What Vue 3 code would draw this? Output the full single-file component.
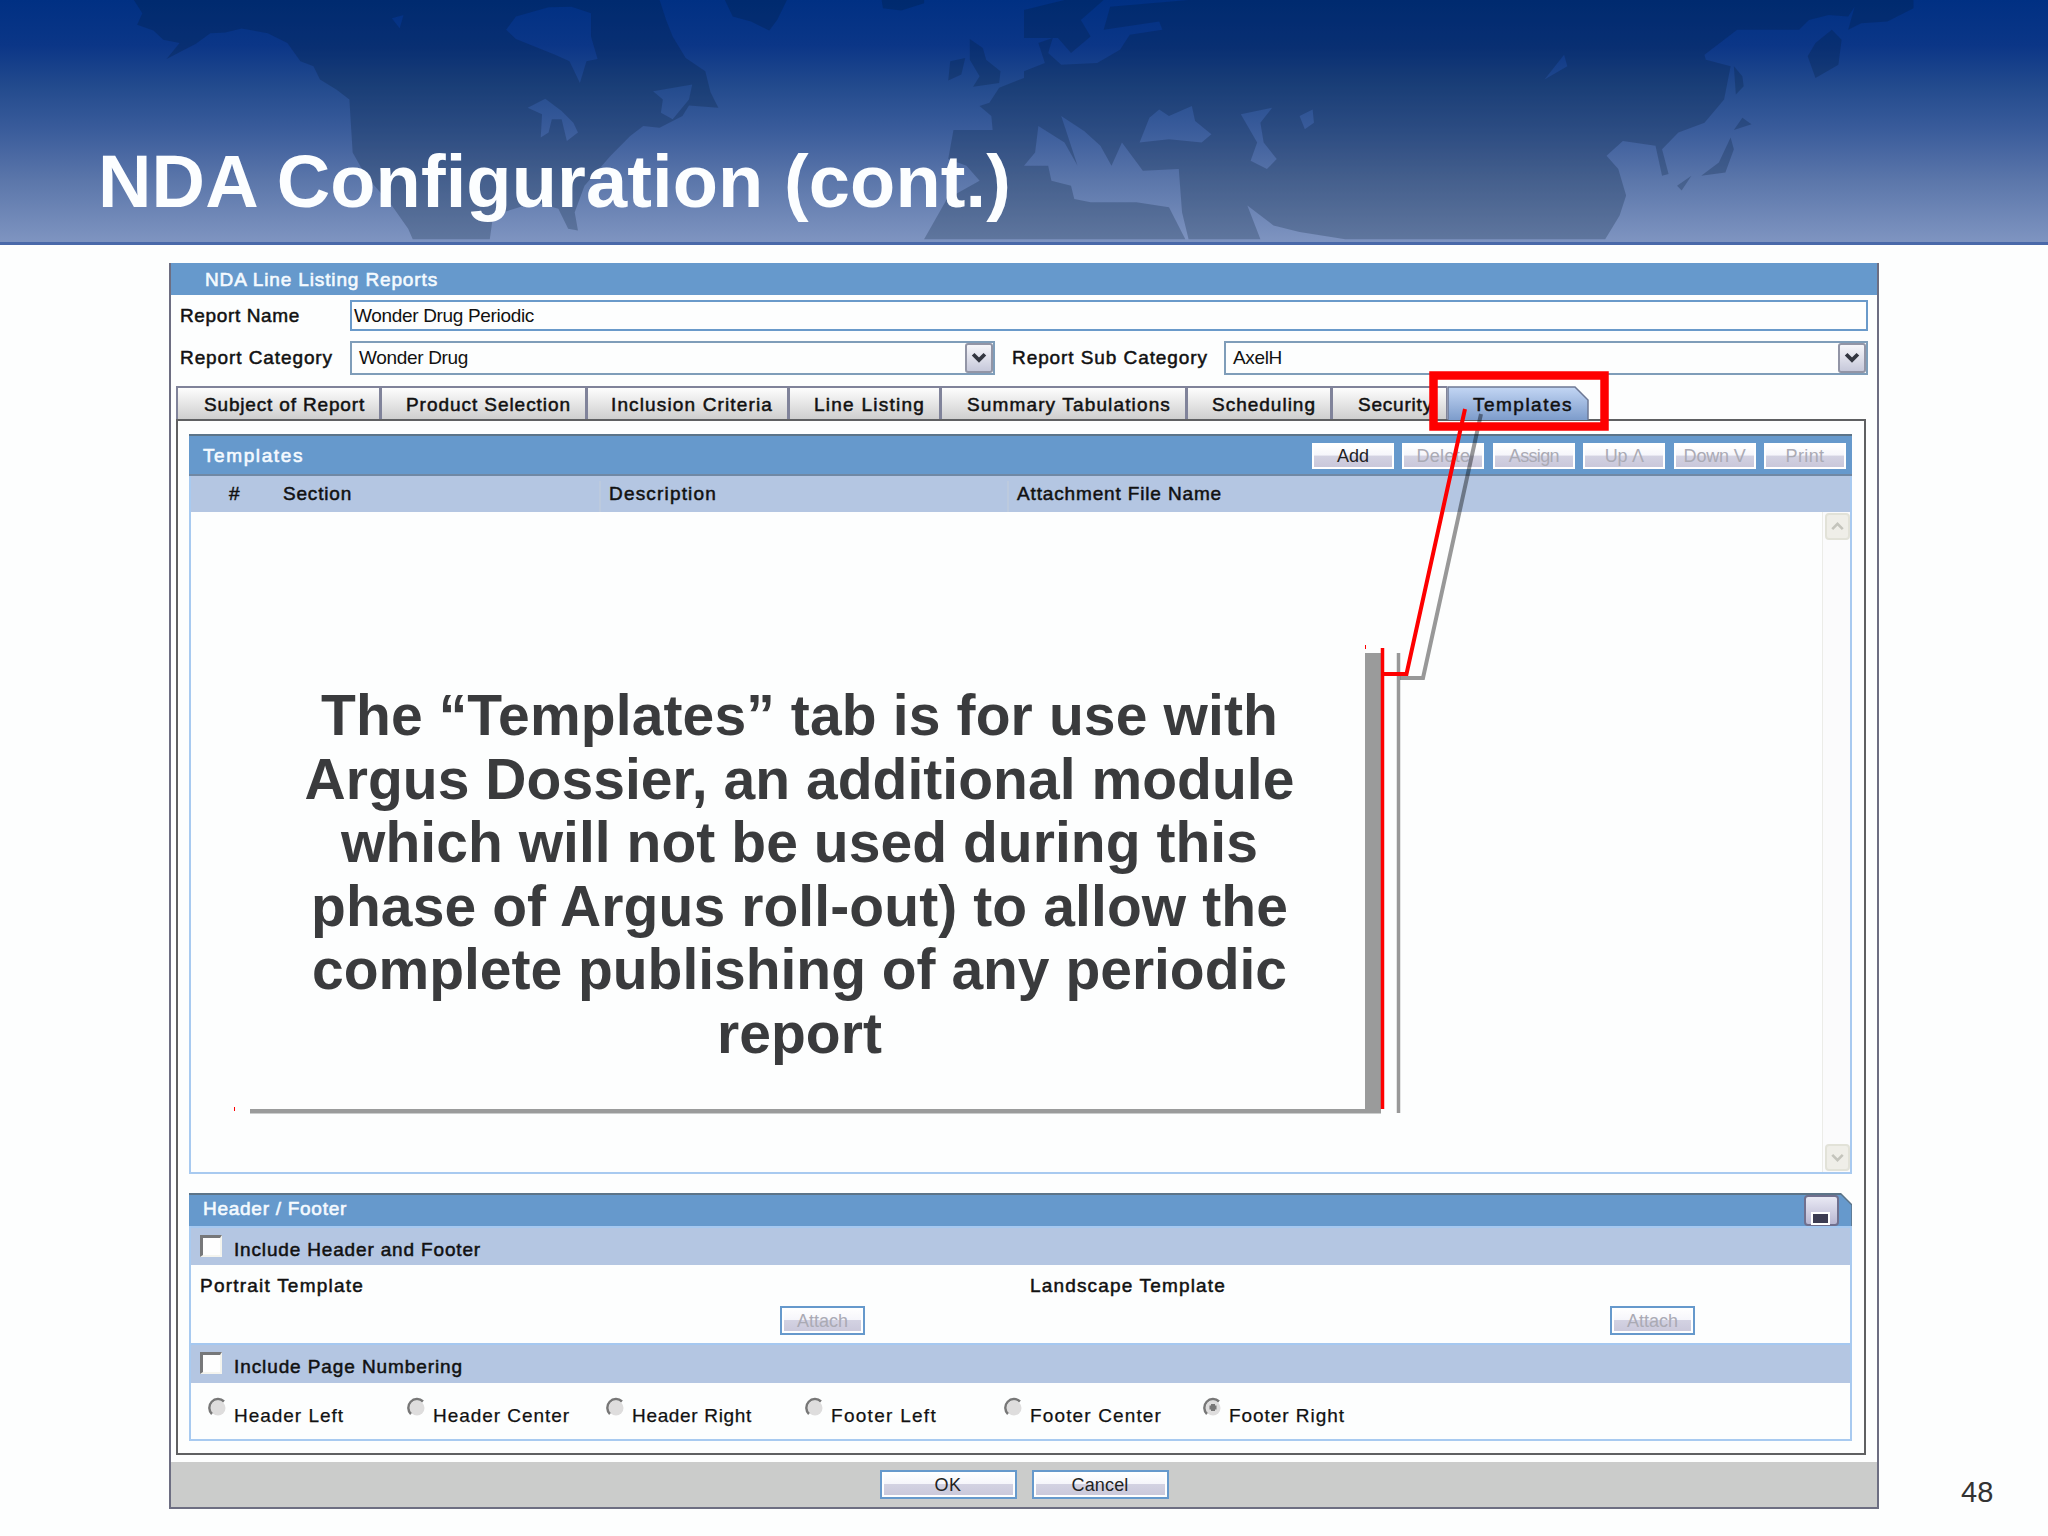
<template>
  <div class="slide">
    <header class="banner">
      <svg class="map" viewBox="0 0 3136 730" preserveAspectRatio="none">
        <g fill="#001a33" fill-opacity="0.24" fill-rule="evenodd">
          <path v-for="(d, i) in lands" :key="i" :d="d" />
        </g>
      </svg>
      <h1><span v-fit="913">NDA Configuration (cont.)</span></h1>
    </header>

    <main class="dialog">
      <div class="dialog-title"><span v-fit="233">NDA Line Listing Reports</span></div>

      <div class="row name-row">
        <label class="strong"><span v-fit="120">Report Name</span></label>
        <div class="input"><span v-fit="180">Wonder Drug Periodic</span></div>
      </div>
      <div class="row category-row">
        <label class="strong"><span v-fit="153">Report Category</span></label>
        <div class="select first">
          <span v-fit="109">Wonder Drug</span>
          <i class="arrow"><svg viewBox="0 0 28 31"><path d="M7 11l7 7 7-7" /></svg></i>
        </div>
        <label class="strong sub"><span v-fit="196">Report Sub Category</span></label>
        <div class="select second">
          <span v-fit="49">AxelH</span>
          <i class="arrow"><svg viewBox="0 0 28 31"><path d="M7 11l7 7 7-7" /></svg></i>
        </div>
      </div>

      <nav class="tabs">
        <div
          v-for="tab in tabs"
          :key="tab.label"
          class="tab strong"
          :class="{ active: tab.active }"
          :style="{ width: tab.width + 'px', paddingLeft: tab.pad + 'px' }"
        >
          <svg v-if="tab.active" class="tab-shape" viewBox="0 0 142 34">
            <defs>
              <linearGradient id="tabFill" x1="0" y1="0" x2="0" y2="1">
                <stop offset="0" stop-color="#c3d6f4" />
                <stop offset="1" stop-color="#7d9ccb" />
              </linearGradient>
            </defs>
            <path d="M1 34V1H128L141 14V34" fill="url(#tabFill)" stroke="#6d7894" stroke-width="1.5" />
          </svg>
          <span v-fit="tab.text">{{ tab.label }}</span>
        </div>
      </nav>

      <section class="panel">
        <div class="list">
          <div class="list-head">
            <span v-fit="101" class="heading">Templates</span>
            <div class="tools">
              <button v-for="b in tools" :key="b.label" class="btn tool" :class="{ off: b.off }">
                <span v-fit="b.text">{{ b.label }}</span>
              </button>
            </div>
          </div>
          <div class="columns strong">
            <div class="col num"><span>#</span></div>
            <div class="col sec"><span v-fit="69">Section</span></div>
            <div class="col desc"><span v-fit="108">Description</span></div>
            <div class="col file"><span v-fit="205">Attachment File Name</span></div>
          </div>
          <div class="list-body">
            <div class="scrollbar">
              <i class="scroll-btn"><svg viewBox="0 0 24 26"><path d="M6 16l6-6 6 6" /></svg></i>
              <i class="scroll-btn"><svg viewBox="0 0 24 26"><path d="M6 10l6 6 6-6" /></svg></i>
            </div>
          </div>
        </div>

        <div class="hf">
          <div class="hf-head">
            <span v-fit="144" class="heading">Header / Footer</span>
            <i class="minus"></i>
            <svg class="corner" viewBox="0 0 12 33"><path d="M0 0H12V12Z" fill="#fdfefe" /><path d="M0 0L12 12V33" fill="none" stroke="#5c7488" stroke-width="1.5" /></svg>
          </div>
          <div class="band strong"><i class="check"></i><span v-fit="247">Include Header and Footer</span></div>
          <div class="attach-row">
            <div class="attach">
              <span v-fit="164" class="strong">Portrait Template</span>
              <button class="btn framed off"><span v-fit="51">Attach</span></button>
            </div>
            <div class="attach">
              <span v-fit="196" class="strong">Landscape Template</span>
              <button class="btn framed off"><span v-fit="51">Attach</span></button>
            </div>
          </div>
          <div class="band second strong"><i class="check"></i><span v-fit="229">Include Page Numbering</span></div>
          <div class="radios">
            <div v-for="r in radios" :key="r.label" class="radio">
              <svg viewBox="0 0 20 20">
                <circle cx="11" cy="11" r="7.5" fill="#dedddd" />
                <path d="M5 17A8 8 0 0 1 17 4.500" fill="none" stroke="#777" stroke-width="2.500" />
                <path v-if="r.on" d="M11 7v7M7.500 10.500h7" stroke="#777" stroke-width="4" />
              </svg>
              <span v-fit="r.text">{{ r.label }}</span>
            </div>
          </div>
        </div>
      </section>

      <footer class="actions">
        <button class="btn framed"><span v-fit="27">OK</span></button>
        <button class="btn framed"><span v-fit="57">Cancel</span></button>
      </footer>
    </main>

    <div class="note">
      <p v-for="line in note" :key="line.label"><span v-fit="line.text">{{ line.label }}</span></p>
    </div>

    <svg class="marks" viewBox="0 0 2048 1536">
      <g fill="none" stroke="#000" stroke-opacity="0.4" stroke-width="4">
        <path d="M1481 414L1423 678H1400" />
        <path d="M1398.500 653V1113" stroke-width="3.500" />
      </g>
      <path d="M1365 653H1381V1113.500H250V1109H1365Z" fill="#9a9b9b" />
      <g fill="none" stroke="#fe0000">
        <path d="M1465 409L1406.500 674H1383" stroke-width="4" />
        <path d="M1382.500 648V1109" stroke-width="3.500" />
        <path d="M1365.500 645V649M234.500 1107V1111" stroke-width="1" />
        <rect x="1433.500" y="375.500" width="171" height="51" stroke-width="8.500" />
      </g>
    </svg>
    <span class="page">48</span>
  </div>
</template>

<script setup>
// Spreads the letters of a label so that it takes exactly the given width.
const vFit = {
  mounted(el, { value }) {
    const natural = el.getBoundingClientRect().width;
    el.style.letterSpacing = (value - natural) / el.textContent.length + 'px';
  },
};

const tabs = [
  { label: 'Subject of Report', width: 204, pad: 26, text: 161 },
  { label: 'Product Selection', width: 206, pad: 24, text: 165 },
  { label: 'Inclusion Criteria', width: 202, pad: 23, text: 162 },
  { label: 'Line Listing', width: 152, pad: 24, text: 111 },
  { label: 'Summary Tabulations', width: 246, pad: 25, text: 204 },
  { label: 'Scheduling', width: 145, pad: 24, text: 104 },
  { label: 'Security', width: 116, pad: 25, text: 75 },
  { label: 'Templates', width: 142, pad: 26, text: 100, active: true },
];

const tools = [
  { label: 'Add', text: 32 },
  { label: 'Delete', text: 54, off: true },
  { label: 'Assign', text: 50, off: true },
  { label: 'Up Λ', text: 39, off: true },
  { label: 'Down V', text: 62, off: true },
  { label: 'Print', text: 39, off: true },
];

const radios = [
  { label: 'Header Left', text: 110 },
  { label: 'Header Center', text: 137 },
  { label: 'Header Right', text: 120 },
  { label: 'Footer Left', text: 106 },
  { label: 'Footer Center', text: 132 },
  { label: 'Footer Right', text: 116, on: true },
];

const note = [
  { label: 'The “Templates” tab is for use with', text: 957 },
  { label: 'Argus Dossier, an additional module', text: 990 },
  { label: 'which will not be used during this', text: 917 },
  { label: 'phase of Argus roll-out) to allow the', text: 977 },
  { label: 'complete publishing of any periodic', text: 975 },
  { label: 'report', text: 165 },
];

const lands = [
  // North America with Hudson Bay and the Great Lakes cut out
  'M205 0L218 40 210 75 235 92 250 120 275 130 255 178 300 132 322 100 345 98 370 86 410 100 440 130 460 185 480 200 490 240 515 270 535 300 540 460 560 530 600 620 625 690 632 722H750L755 650 820 610 855 630 870 690 885 695 880 640 895 560 935 470 965 410 985 380 1010 385 1045 350 1055 318 1100 325 1088 278 1080 215 1050 175 1030 110 1020 60 1010 0Z' +
    'M840 22L790 50 775 90 790 118 850 165 872 185 888 250 898 185 915 178 905 110 905 40 875 20Z' +
    'M835 298L808 325 830 345 828 415 840 400 845 360 860 360 868 425 885 400 878 370 860 335ZM1000 275L1060 255 1055 300 1030 360 1012 340 1015 300ZM600 55L618 45 612 85Z',
  // Greenland and Iceland
  'M1110 0L1122 50 1150 65 1178 92 1190 60 1205 0ZM1350 0L1352 25 1380 32 1415 10V0Z',
  // British Isles
  'M1485 118L1505 145 1510 180 1532 215 1530 250 1490 262 1500 230 1485 180ZM1455 185L1478 175 1472 225 1452 243Z',
  // Europe and Asia
  'M1568 235L1530 265 1515 310 1500 320 1518 350 1520 392H1460L1452 480 1480 500 1500 545 1450 600 1415 722H1815L1790 625 1740 610 1670 610 1645 600 1640 560 1610 545 1605 500 1568 500 1585 460 1590 380 1630 430 1650 500 1625 350 1660 395 1685 440 1702 500 1718 430 1750 515 1805 510 1810 640 1820 722H1930L1910 620 1950 680 1990 700 2060 722H2458L2480 650 2490 590 2478 510 2460 470 2485 425 2535 440 2545 530 2555 525 2545 450 2570 400 2610 370 2640 300 2650 200 2612 180 2610 165 2660 90H2755L2770 60 2800 45 2830 50 2840 20 2830 90 2850 70 2890 65 2930 25V0H1820L1700 20 1690 90 1775 65 1780 90 1730 105 1715 150 1680 190 1625 195 1605 160 1612 115 1590 130 1600 190 1568 215Z' +
    'M1745 430L1760 355 1775 330 1790 350 1825 320 1830 365 1855 405 1840 430 1790 420ZM1900 345L1948 325 1930 370 1935 430 1955 480 1940 510 1915 485 1925 430ZM1990 350L2010 330 2012 370 1998 390ZM2365 240L2395 165 2400 200Z',
  // Scandinavia
  'M1568 30L1630 0H1690L1655 60 1670 110 1640 160 1620 115 1568 115Z',
  // Kamchatka, Sakhalin and Japan
  'M2805 90L2820 120 2815 195 2780 235 2768 170 2780 130ZM2655 200L2668 230 2670 260 2658 285ZM2668 355L2682 375 2655 392ZM2650 415L2655 450 2642 520 2605 530 2632 490ZM2568 560L2590 530 2575 575Z',
];
</script>

<style>
body {
  margin: 0;
  background: #fdfefe;
}
</style>

<style scoped>
.slide {
  position: relative;
  width: 2048px;
  height: 1536px;
  overflow: hidden;
  background: #fdfefe;
  font-family: "Liberation Sans", Arial, sans-serif;
  font-size: 19px;
  line-height: 24px;
  color: #111;
}

.slide * {
  box-sizing: border-box;
}

.slide span {
  display: inline-block;
  white-space: nowrap;
}

.strong {
  -webkit-text-stroke: 0.5px currentColor;
}

.banner {
  position: relative;
  height: 245px;
  background: linear-gradient(#003083 0, #0b3687 45px, #224a8d 85px, #3a5c9b 130px, #5b76aa 180px, #7f95c1 243px);
  border-bottom: 3px solid #4a69a9;
}

.map {
  position: absolute;
  inset: 0;
  width: 100%;
  height: 242px;
}

.banner h1 {
  position: relative;
  margin: 0;
  padding: 140px 0 0 98px;
  font-size: 74px;
  line-height: 84px;
  color: #fcfeff;
}

.dialog {
  width: 1710px;
  height: 1246px;
  margin: 18px 0 0 169px;
  border: 2px solid #6d6e82;
  border-top: 0;
  display: flex;
  flex-direction: column;
}

.dialog-title {
  height: 32px;
  padding: 5px 0 0 34px;
  background: #6699cc;
  color: #f4faff;
  -webkit-text-stroke: 0.6px currentColor;
}

.row {
  display: flex;
  align-items: center;
  padding: 0 9px;
}

.row label {
  width: 170px;
}

.name-row {
  height: 31px;
  margin-top: 5px;
}

.input {
  flex: 1;
  height: 31px;
  padding: 2px 0 0 2px;
  border: 2px solid #6a9aca;
}

.category-row {
  height: 34px;
  margin-top: 10px;
}

.select {
  display: flex;
  justify-content: space-between;
  height: 34px;
  padding-left: 7px;
  line-height: 29px;
  border: 2px solid #7f9db9;
}

.select.first {
  width: 645px;
}

.row .sub {
  width: 229px;
  padding-left: 17px;
}

.select.second {
  flex: 1;
}

.arrow {
  width: 28px;
  height: 30px;
  border: 2px solid #9295a6;
  border-radius: 3px;
  background: linear-gradient(#f6f6fa, #c6c8da);
}

.arrow svg {
  display: block;
  width: 24px;
  height: 26px;
  fill: none;
  stroke: #333640;
  stroke-width: 4.500;
}

.tabs {
  display: flex;
  height: 33px;
  margin: 11px 0 0 5px;
}

.tab {
  position: relative;
  height: 33px;
  padding-top: 5px;
  border: 2px solid #80839a;
  border-width: 2px 1px 0 2px;
  background: linear-gradient(#fdfdfd, #cfcfcf);
}

.tab.active {
  border: 0;
  background: none;
  padding-top: 7px;
}

.tab-shape {
  position: absolute;
  left: 0;
  top: 0;
  width: 142px;
  height: 34px;
}

.tab span {
  position: relative;
}

.panel {
  width: 1690px;
  height: 1036px;
  margin-left: 5px;
  padding: 13px 12px 0 11px;
  border: 2px solid #5f6062;
}

.list {
  height: 740px;
  display: flex;
  flex-direction: column;
}

.list-head {
  display: flex;
  justify-content: space-between;
  height: 42px;
  padding: 7px 6px 0 14px;
  background: #6699cc;
  border-top: 2px solid #5c7488;
  border-bottom: 2px solid #7088a4;
}

.heading {
  color: #f4faff;
  -webkit-text-stroke: 0.6px currentColor;
  line-height: 26px;
}

.tools {
  display: flex;
  gap: 8.400px;
}

.btn {
  display: block;
  padding: 0;
  font: 18px/22px "Liberation Sans", Arial, sans-serif;
  color: #222;
  text-align: center;
  border: 2px solid #fff;
  border-radius: 0;
  background: linear-gradient(#fff, #f6f6fb 46%, #d3d2e2 50%, #c9c7da);
}

.tool {
  width: 82px;
  height: 26px;
}

.btn.off {
  color: #aaaab4;
}

.columns {
  display: flex;
  height: 36px;
  padding-top: 5px;
  background: #b4c6e2;
  border-left: 2px solid #a8caf0;
  border-right: 2px solid #a8caf0;
}

.col {
  height: 31px;
  padding-top: 1px;
}

.num {
  width: 83px;
  padding-left: 38px;
}

.sec {
  width: 325px;
  padding-left: 9px;
}

.desc {
  width: 408px;
  padding-left: 8px;
  border-left: 2px solid #bccade;
}

.file {
  padding-left: 8px;
  border-left: 2px solid #bccade;
}

.list-body {
  flex: 1;
  display: flex;
  justify-content: flex-end;
  border: 2px solid #a8caf0;
  border-top: 0;
}

.scrollbar {
  display: flex;
  flex-direction: column;
  justify-content: space-between;
  width: 28px;
  padding: 1px 0 1px 2px;
  border-left: 1px solid #ecece8;
  background: #fbfbfc;
}

.scroll-btn {
  width: 25px;
  height: 27px;
  border: 2px solid #e2e2d8;
  border-radius: 4px;
  background: #efeee8;
}

.scroll-btn svg {
  display: block;
  width: 21px;
  height: 23px;
  fill: none;
  stroke: #c4c4bc;
  stroke-width: 3;
}

.hf {
  height: 248px;
  margin-top: 19px;
  border: 2px solid #a8caf0;
  border-top: 0;
}

.hf-head {
  position: relative;
  display: flex;
  height: 33px;
  margin: 0 -2px;
  padding: 1px 0 0 14px;
  background: #6699cc;
  border-top: 2px solid #5c7488;
}

.minus {
  position: relative;
  width: 35px;
  height: 31px;
  margin: -1px 13px 0 auto;
  border: 2px solid #70708e;
  border-radius: 4px;
  background: linear-gradient(#e9e9f4, #b9b7d2);
}

.minus::after {
  content: "";
  position: absolute;
  left: 5px;
  top: 15px;
  width: 15px;
  height: 9px;
  border: 2px solid #fff;
  background: #3c3c52;
}

.corner {
  position: absolute;
  right: 0;
  top: -2px;
  width: 12px;
  height: 33px;
}

.band {
  display: flex;
  height: 39px;
  padding: 10px 0 0 9px;
  background: #b4c6e2;
  border-top: 2px solid #a5c8f0;
}

.band.second {
  height: 40px;
}

.check {
  width: 22px;
  height: 22px;
  margin: -3px 12px 0 0;
  border: 2px solid #f4f4ee;
  border-top: 3px solid #77787a;
  border-left: 3px solid #77787a;
  background: #fefefe;
}

.attach-row {
  display: flex;
  height: 78px;
  padding: 9px 0 0 9px;
}

.attach {
  width: 830px;
  flex: none;
}

.framed {
  width: 85px;
  height: 29px;
  border: 2px solid #6699cc;
  box-shadow: inset 0 0 0 2px #fff;
  line-height: 24px;
}

.attach .framed {
  margin: 8px 0 0 580px;
}

.radios {
  display: flex;
  padding: 14px 0 0 16px;
}

.radio {
  display: flex;
  width: 199px;
}

.radio svg {
  width: 20px;
  height: 20px;
  margin-right: 7px;
}

.radio span {
  padding-top: 7px;
  -webkit-text-stroke: 0.25px currentColor;
}

.actions {
  display: flex;
  justify-content: center;
  gap: 15px;
  height: 45px;
  margin-top: auto;
  padding: 8px 0 0;
  background: #cbcccb;
}

.actions .framed {
  width: 137px;
}

.note {
  position: absolute;
  left: 250px;
  top: 684px;
  width: 1099px;
  font-size: 57px;
  font-weight: bold;
  line-height: 63.500px;
  text-align: center;
  color: #3a3b3d;
}

.note p {
  margin: 0;
}

.marks {
  position: absolute;
  inset: 0;
  width: 2048px;
  height: 1536px;
}

.page {
  position: absolute;
  left: 1961px;
  top: 1476px;
  font-size: 29px;
  line-height: 32px;
  color: #333;
}
</style>
